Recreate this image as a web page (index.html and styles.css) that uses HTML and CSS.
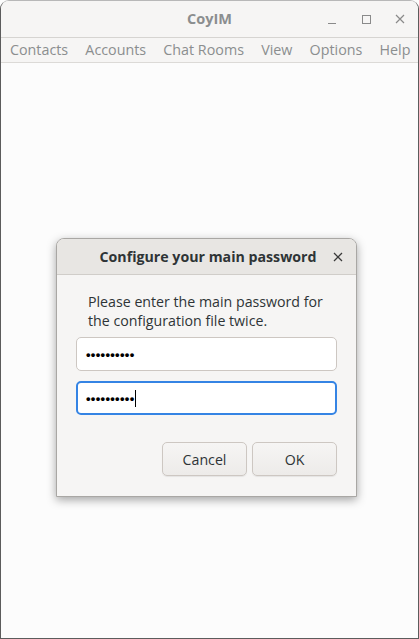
FILE: index.html
```html
<!DOCTYPE html>
<html>
<head>
<meta charset="utf-8">
<link rel="stylesheet" href="styles.css">
</head>
<body>
<div class="window">
  <div class="titlebar">
    <div class="title">CoyIM</div>
    <div class="controls">
      <span class="ctl min"></span>
      <span class="ctl max"></span>
      <span class="ctl close">
        <svg width="10" height="10" viewBox="0 0 10 10"><path d="M1 1 L9 9 M9 1 L1 9" stroke="#8a8a8a" stroke-width="1.2" fill="none"/></svg>
      </span>
    </div>
  </div>
  <div class="menubar">
    <span class="menu">Contacts</span>
    <span class="menu">Accounts</span>
    <span class="menu">Chat Rooms</span>
    <span class="menu">View</span>
    <span class="menu">Options</span>
    <span class="menu">Help</span>
  </div>
  <div class="content">
    <div class="dialog">
      <div class="dheader">
        <div class="dtitle">Configure your main password</div>
        <span class="dclose">
          <svg width="10" height="10" viewBox="0 0 10 10"><path d="M1 1 L9 9 M9 1 L1 9" stroke="#3a3a3a" stroke-width="1.3" fill="none"/></svg>
        </span>
      </div>
      <div class="dbody">
        <p class="msg">Please enter the main password for the configuration file twice.</p>
        <div class="entry first"><span class="dots">••••••••••</span></div>
        <div class="entry focus"><span class="dots">••••••••••</span><span class="caret"></span></div>
        <div class="buttons">
          <div class="btn">Cancel</div>
          <div class="btn">OK</div>
        </div>
      </div>
    </div>
  </div>
</div>
</body>
</html>
```

FILE: styles.css
```css
html, body {
  margin: 0;
  padding: 0;
  width: 419px;
  height: 639px;
  overflow: hidden;
  background: #fcfcfc;
}
body {
  font-family: "Open Sans", "Noto Sans", sans-serif;
}
.window {
  box-sizing: border-box;
  width: 419px;
  height: 639px;
  border: 1px solid #5c5c5c;
  border-top-color: #b8b8b8;
  border-radius: 9px 9px 0 0;
  display: flex;
  flex-direction: column;
  background: #fcfcfc;
  overflow: hidden;
}
.titlebar {
  height: 36px;
  flex: none;
  background: #f6f5f4;
  border-bottom: 1px solid #d6d4d1;
  display: flex;
  align-items: center;
  justify-content: center;
  position: relative;
}
.title {
  font-weight: 700;
  font-size: 14.5px;
  color: #8b8e8f;
  margin-top: -1px;
}
.controls {
  position: absolute;
  right: 1px;
  top: 0;
  height: 36px;
  display: flex;
  align-items: center;
}
.ctl {
  width: 34px;
  height: 20px;
  display: flex;
  align-items: center;
  justify-content: center;
}
.ctl.min::before {
  content: "";
  width: 8px;
  height: 1px;
  background: #8a8a8a;
  margin-top: 8px;
}
.ctl.max::before {
  content: "";
  width: 7px;
  height: 7px;
  border: 1px solid #8a8a8a;
}
.menubar {
  height: 24px;
  flex: none;
  background: #f6f5f4;
  border-bottom: 1px solid #dcdad7;
  display: flex;
  align-items: center;
  padding-left: 9px;
  gap: 17.2px;
}
.menu {
  font-size: 14.3px;
  color: #8b8e8f;
  line-height: 24px;
}
.content {
  flex: 1;
  display: flex;
  justify-content: flex-start;
  padding-top: 175px;
  padding-left: 55px;
}
.dialog {
  width: 301px;
  height: 259px;
  box-sizing: border-box;
  border: 1px solid #a9a7a4;
  border-radius: 8px 8px 0 0;
  background: #f6f5f4;
  box-shadow: 0 3px 10px rgba(0,0,0,0.35);
  display: flex;
  flex-direction: column;
  overflow: hidden;
}
.dheader {
  height: 35px;
  flex: none;
  background: #e8e6e3;
  border-bottom: 1px solid #d0cdc9;
  display: flex;
  align-items: center;
  justify-content: center;
  position: relative;
}
.dtitle {
  font-weight: 700;
  font-size: 14.2px;
  color: #2e3436;
  margin-left: 3px;
}
.dclose {
  position: absolute;
  right: 13px;
  top: 13px;
  display: flex;
}
.dbody {
  padding: 17px 19px 0 19px;
  display: flex;
  flex-direction: column;
}
.msg {
  margin: 0 0 0 12px;
  font-size: 14.2px;
  line-height: 19px;
  color: #2e3436;
  width: 250px;
}
.entry {
  margin-top: 10px;
  height: 34px;
  box-sizing: border-box;
  border: 1px solid #cdc7c2;
  border-radius: 5px;
  background: #ffffff;
  display: flex;
  align-items: center;
  padding-left: 9px;
}
.entry.first { margin-top: 7px; }
.entry.focus {
  border: 2px solid #3584e4;
  padding-left: 8px;
}
.dots {
  font-family: "Liberation Sans", sans-serif;
  font-size: 13px;
  font-weight: 700;
  letter-spacing: 0.3px;
  color: #000;
  line-height: 1;
}
.caret {
  width: 1px;
  height: 17px;
  background: #000;
}
.buttons {
  margin-top: 27px;
  display: flex;
  justify-content: flex-end;
  gap: 5px;
}
.btn {
  width: 85px;
  height: 34px;
  box-sizing: border-box;
  border: 1px solid #cdc7c2;
  border-radius: 5px;
  background: linear-gradient(#f6f5f4, #edebe9);
  box-shadow: 0 1px 1px rgba(0,0,0,0.07);
  display: flex;
  align-items: center;
  justify-content: center;
  font-size: 14.2px;
  color: #2e3436;
}
```
